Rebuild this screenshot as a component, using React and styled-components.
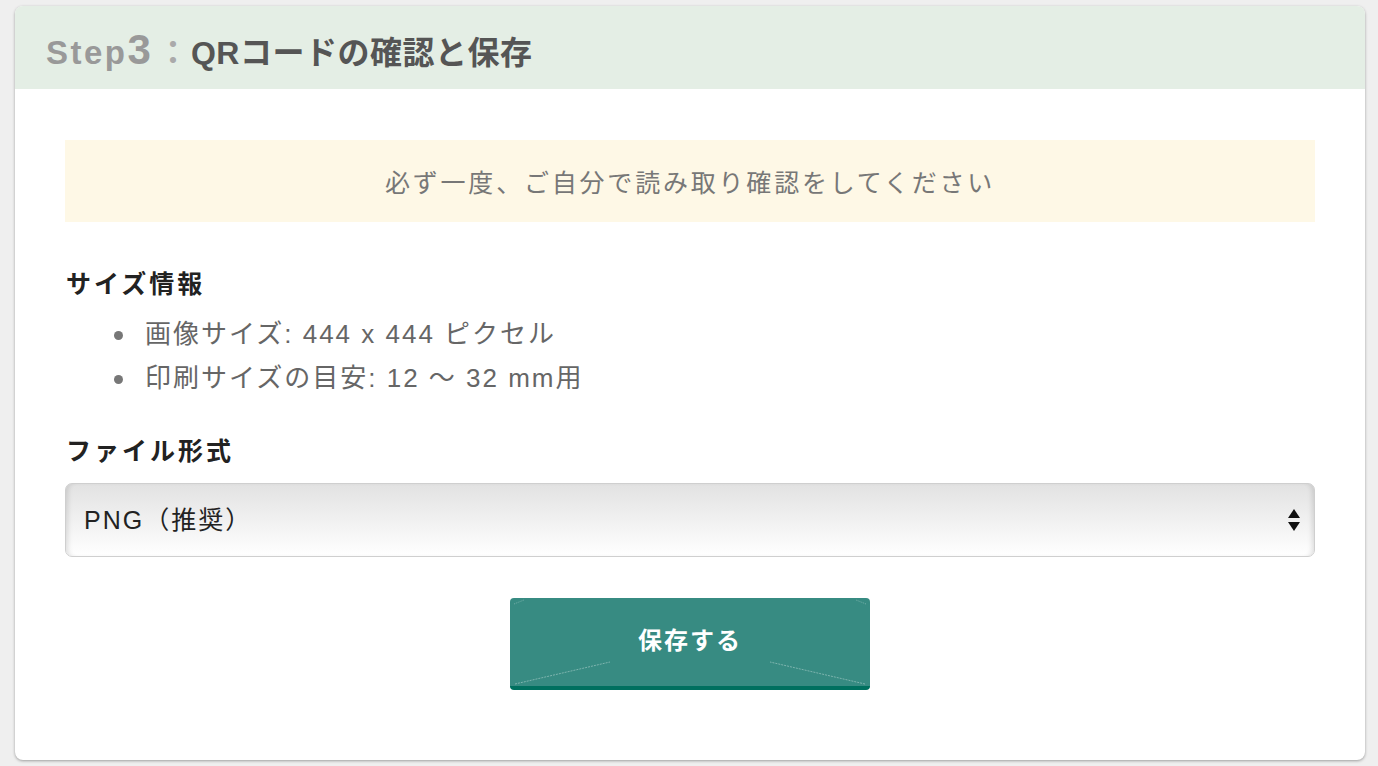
import React from "react";
import styled, {createGlobalStyle} from "styled-components";

const GlobalStyle = createGlobalStyle`
    body {
        margin: 0;
        background: #efefef;
        font-family: "Liberation Sans", "Noto Sans CJK JP", sans-serif;
    }
`;

const Page = styled.div`
    padding: 6px 13px 6px 15px;
`;

const Card = styled.section`
    background: #fff;
    border-radius: 8px;
    box-shadow: 0 1px 3px rgba(0, 0, 0, 0.35);
    overflow: hidden;
`;

const Header = styled.h2`
    margin: 0;
    height: 83px;
    display: flex;
    align-items: baseline;
    padding: 23px 0 0 31px;
    box-sizing: border-box;
    background: #e4eee5;
    font-size: 32px;
    line-height: 1;
    font-weight: bold;
    color: #555;
`;

const StepLabel = styled.span`
    color: #999;
    font-size: ${props => props.big ? "42px" : "33px"};
    letter-spacing: ${props => props.big ? "0" : "2.5px"};
`;

const Colon = styled.span`
    color: #aaa;
    margin: 0 2px 0 6px;
`;

const Title = styled.span`
    letter-spacing: 0.5px;
`;

const Body = styled.div`
    padding: 51px 50px 70px;
`;

const Notice = styled.div`
    height: 82px;
    display: flex;
    align-items: center;
    justify-content: center;
    background: #fef8e6;
    color: #777;
    font-size: 25px;
    letter-spacing: 2.8px;
`;

const Heading = styled.h3`
    margin: ${props => props.top}px 0 0 1px;
    font-size: 25px;
    line-height: 36px;
    font-weight: bold;
    letter-spacing: 3px;
    color: #222;
`;

const List = styled.ul`
    margin: 10px 0 0;
    padding-left: 80px;
    list-style: none;
    color: #666;
    font-size: 26px;
    line-height: 44px;
    letter-spacing: 2px;
`;

const Item = styled.li`
    position: relative;

    &::before {
        content: "";
        position: absolute;
        left: -31px;
        top: 19px;
        width: 9px;
        height: 9px;
        border-radius: 50%;
        background: #777;
    }
`;

const SelectWrap = styled.div`
    position: relative;
    margin-top: 14px;
`;

const Select = styled.select`
    appearance: none;
    width: 100%;
    height: 74px;
    padding: 0 50px 0 18px;
    border: 1px solid #cfcfcf;
    border-radius: 7px;
    background: linear-gradient(#e2e2e2, #ffffff);
    box-shadow: inset 5px 0 5px -3px rgba(0, 0, 0, 0.12),
                inset -5px 0 5px -3px rgba(0, 0, 0, 0.12);
    font-family: inherit;
    font-size: 25px;
    letter-spacing: 2px;
    color: #222;
    outline: none;
`;

const Arrows = styled.svg`
    position: absolute;
    right: 14px;
    top: 50%;
    transform: translateY(-50%);
    pointer-events: none;
`;

const ButtonRow = styled.div`
    display: flex;
    justify-content: center;
    margin-top: 41px;
`;

const SaveButton = styled.button`
    position: relative;
    width: 360px;
    height: 92px;
    padding: 0 0 8px;
    border: none;
    border-bottom: 4px solid #00705f;
    border-radius: 4px;
    background: #378b82;
    color: #fff;
    font-family: inherit;
    font-size: 24px;
    font-weight: bold;
    letter-spacing: 2px;
    cursor: pointer;
`;

const Deco = styled.svg`
    position: absolute;
    inset: 0;
    pointer-events: none;
`;

export default function App() {
    return (
        <Page>
            <GlobalStyle/>
            <Card>
                <Header>
                    <StepLabel>Step</StepLabel>
                    <StepLabel big>3</StepLabel>
                    <Colon>：</Colon>
                    <Title>QRコードの確認と保存</Title>
                </Header>
                <Body>
                    <Notice>必ず一度、ご自分で読み取り確認をしてください</Notice>
                    <Heading top={44}>サイズ情報</Heading>
                    <List>
                        <Item>画像サイズ: 444 x 444 ピクセル</Item>
                        <Item>印刷サイズの目安: 12 〜 32 mm用</Item>
                    </List>
                    <Heading top={33}>ファイル形式</Heading>
                    <SelectWrap>
                        <Select defaultValue="png">
                            <option value="png">PNG（推奨）</option>
                            <option value="jpg">JPG</option>
                            <option value="svg">SVG</option>
                        </Select>
                        <Arrows width="14" height="24" viewBox="0 0 14 24">
                            <path d="M7 1 L13 10 H1 Z" fill="#111"/>
                            <path d="M7 23 L13 14 H1 Z" fill="#111"/>
                        </Arrows>
                    </SelectWrap>
                    <ButtonRow>
                        <SaveButton>
                            <Deco width="360" height="88" viewBox="0 0 360 88">
                                <path d="M5 86 L100 64 M355 86 L260 64" stroke="rgba(255,255,255,0.35)"
                                      strokeWidth="1" strokeDasharray="2 1"/>
                                <path d="M4 6 L14 2 M356 6 L346 2" stroke="rgba(255,255,255,0.3)"
                                      strokeWidth="1" strokeDasharray="1 1"/>
                            </Deco>
                            保存する
                        </SaveButton>
                    </ButtonRow>
                </Body>
            </Card>
        </Page>
    );
}
